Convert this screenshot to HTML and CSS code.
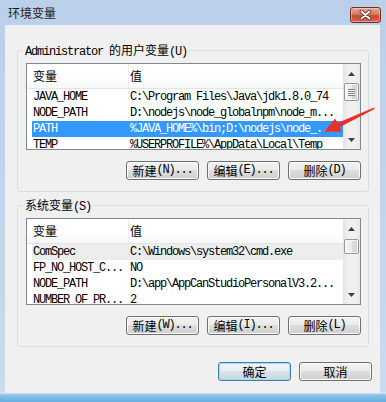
FILE: index.html
```html
<!DOCTYPE html>
<html lang="zh-CN">
<head>
<meta charset="utf-8">
<title>环境变量</title>
<link rel="stylesheet" href="styles.css">
</head>
<body>
<div class="window">
  <div class="titlebar">
    <span class="title cjk">环境变量</span>
    <div class="close">
      <svg width="13" height="10" viewBox="0 0 13 10">
        <path d="M2.5 1.5 L10.5 8.5 M10.5 1.5 L2.5 8.5" stroke="#5a2018" stroke-width="3.6" stroke-linecap="round"/>
        <path d="M2.5 1.5 L10.5 8.5 M10.5 1.5 L2.5 8.5" stroke="#fff" stroke-width="2" stroke-linecap="round"/>
      </svg>
    </div>
  </div>
  <div class="client">
    <fieldset class="group">
      <legend>Administrator <span class="cjk">的用户变量</span>(U)</legend>
      <div class="list">
        <div class="list-body">
          <div class="header"><div class="c1"><span class="cjk">变量</span></div><div class="c2"><span class="cjk">值</span></div></div>
          <div class="row"><div class="c1">JAVA_HOME</div><div class="c2">C:\Program Files\Java\jdk1.8.0_74</div></div>
          <div class="row"><div class="c1">NODE_PATH</div><div class="c2">D:\nodejs\node_globalnpm\node_m...</div></div>
          <div class="row sel"><div class="c1">PATH</div><div class="c2">%JAVA_HOME%\bin;D:\nodejs\node_...</div></div>
          <div class="row"><div class="c1">TEMP</div><div class="c2">%USERPROFILE%\AppData\Local\Temp</div></div>
        </div>
        <div class="scrollbar">
          <div class="sb-btn"><svg width="7" height="4" viewBox="0 0 7 4"><polygon points="3.5,0 7,4 0,4" fill="#404040"/></svg></div>
          <div class="thumb"><div class="grip"></div></div>
          <div class="sb-space"></div>
          <div class="sb-btn"><svg width="7" height="4" viewBox="0 0 7 4"><polygon points="0,0 7,0 3.5,4" fill="#404040"/></svg></div>
        </div>
      </div>
      <div class="buttons">
        <div class="btn"><span class="cjk">新建</span>(N)...</div>
        <div class="btn"><span class="cjk">编辑</span>(E)...</div>
        <div class="btn"><span class="cjk">删除</span>(D)</div>
      </div>
    </fieldset>
    <fieldset class="group second">
      <legend><span class="cjk">系统变量</span>(S)</legend>
      <div class="list">
        <div class="list-body">
          <div class="header"><div class="c1"><span class="cjk">变量</span></div><div class="c2"><span class="cjk">值</span></div></div>
          <div class="row inactive"><div class="c1">ComSpec</div><div class="c2">C:\Windows\system32\cmd.exe</div></div>
          <div class="row"><div class="c1">FP_NO_HOST_C...</div><div class="c2">NO</div></div>
          <div class="row"><div class="c1">NODE_PATH</div><div class="c2">D:\app\AppCanStudioPersonalV3.2...</div></div>
          <div class="row"><div class="c1">NUMBER_OF_PR...</div><div class="c2">2</div></div>
        </div>
        <div class="scrollbar">
          <div class="sb-btn"><svg width="7" height="4" viewBox="0 0 7 4"><polygon points="3.5,0 7,4 0,4" fill="#404040"/></svg></div>
          <div class="thumb small"></div>
          <div class="sb-space"></div>
          <div class="sb-btn"><svg width="7" height="4" viewBox="0 0 7 4"><polygon points="0,0 7,0 3.5,4" fill="#404040"/></svg></div>
        </div>
      </div>
      <div class="buttons">
        <div class="btn"><span class="cjk">新建</span>(W)...</div>
        <div class="btn"><span class="cjk">编辑</span>(I)...</div>
        <div class="btn"><span class="cjk">删除</span>(L)</div>
      </div>
    </fieldset>
    <div class="dialog-buttons">
      <div class="btn default"><span class="cjk">确定</span></div>
      <div class="btn"><span class="cjk">取消</span></div>
    </div>
  </div>
</div>
<svg class="arrow" width="386" height="402" viewBox="0 0 386 402">
  <polygon points="374.1,107.6 337.3,122.9 335.2,118.6 324,132 341.6,131.4 339.5,127.3 374.6,108.9" fill="#e5322a"/>
</svg>
</body>
</html>
```

FILE: styles.css
```css
* { box-sizing: border-box; }
html, body { margin: 0; padding: 0; }
body {
  width: 386px;
  height: 402px;
  overflow: hidden;
  position: relative;
  background: linear-gradient(to bottom, #bad0ea 0px, #c4d7ed 300px, #c9dbef 391px, #d6e5f4 393px, #8ac2ea 395px, #66ace0 402px);
  font-family: "Liberation Mono", "Noto Sans CJK SC", monospace;
  font-size: 12px;
  letter-spacing: -1.2px;
  color: #000;
}
.cjk {
  font-family: "Noto Sans CJK SC", "Noto Sans CJK JP", sans-serif;
  font-size: 12px;
  letter-spacing: 0;
}
.titlebar {
  height: 25px;
  display: flex;
  align-items: flex-start;
  justify-content: space-between;
  padding-left: 8px;
  padding-right: 5px;
}
.title {
  margin-top: 6px;
  line-height: 14px;
  color: #1a1a1a;
}
.close {
  margin-top: 7px;
  width: 31px;
  height: 16px;
  border: 1px solid #7a2b20;
  border-radius: 3px;
  background: linear-gradient(#e6a596, #d77c68 45%, #c7472f 55%, #d9684c);
  box-shadow: inset 0 0 0 1px rgba(255, 255, 255, 0.35);
  display: flex;
  align-items: center;
  justify-content: center;
}
.client {
  margin-left: 5px;
  width: 375px;
  height: 368px;
  background: #f0f0f0;
  padding-top: 19px;
}
.group {
  margin: 0 11px 0 12px;
  padding: 7px 7px 11px 8px;
  border: 1px solid #d5dfe5;
  border-radius: 3px;
  min-width: 0;
}
.group.second { margin-top: 7px; }
.group legend {
  height: 12px;
  line-height: 12px;
  padding: 0 2px;
  margin-left: -3px;
  white-space: nowrap;
}
.group legend .cjk { line-height: 12px; }
.list {
  display: flex;
  height: 87px;
  border: 1px solid #828790;
  background: #fff;
}
.list-body {
  flex: 1;
  min-width: 0;
  overflow: hidden;
}
.header {
  display: flex;
  height: 25px;
  padding-left: 5px;
  border-bottom: 1px solid #e5e5e5;
  background: linear-gradient(#ffffff, #ffffff 55%, #f6f7f8);
  line-height: 24px;
}
.header .c1 { border-right: 1px solid #ececec; }
.row {
  display: flex;
  height: 16px;
  line-height: 16px;
  margin-left: 5px;
  white-space: nowrap;
}
.c1 {
  width: 97px;
  flex: none;
  padding-left: 1px;
  overflow: hidden;
}
.c2 {
  flex: 1;
  min-width: 0;
  padding-left: 1px;
  overflow: hidden;
}
.row.sel { background: #3399ff; color: #fff; }
.row.inactive { background: #ededed; }
.scrollbar {
  width: 17px;
  flex: none;
  display: flex;
  flex-direction: column;
  align-items: center;
  background: linear-gradient(to right, #e3e3e3, #f0f0f0 30%, #f1f1f1 70%, #e7e7e7);
}
.sb-btn {
  width: 17px;
  height: 17px;
  display: flex;
  align-items: center;
  justify-content: center;
  padding-top: 2px;
}
.sb-btn:last-child { padding-top: 0; padding-bottom: 1px; }
.thumb {
  margin-top: 2px;
  width: 15px;
  height: 18px;
  border: 1px solid #979797;
  border-radius: 2px;
  background: linear-gradient(to right, #f6f6f6, #ececec 50%, #dcdcdc 51%, #d2d2d2);
  box-shadow: inset 0 0 0 1px rgba(255, 255, 255, 0.7);
  display: flex;
  align-items: center;
  justify-content: center;
}
.thumb.small { height: 15px; margin-top: 3px; }
.grip {
  width: 7px;
  height: 7px;
  background: repeating-linear-gradient(to bottom, #7c7c7c 0, #7c7c7c 1px, #fafafa 1px, #fafafa 2px);
}
.sb-space { flex: 1; }
.buttons {
  display: flex;
  justify-content: flex-end;
  gap: 8px;
  margin-top: 11px;
}
.btn {
  width: 73px;
  height: 19px;
  border: 1px solid #707070;
  border-radius: 3px;
  background: linear-gradient(#f3f3f3, #ebebeb 45%, #dddddd 50%, #cfcfcf);
  box-shadow: inset 0 0 0 1px #fbfbfb;
  display: flex;
  align-items: center;
  justify-content: center;
  line-height: 17px;
  white-space: nowrap;
}
.btn .cjk { line-height: 17px; }
.btn.default {
  border-color: #3c7fb1;
  box-shadow: inset 0 0 0 1px #9ddcf6;
  background: linear-gradient(#f2f6f9, #e8eef2 45%, #d8e2e8 50%, #ccd7de);
}
.dialog-buttons {
  display: flex;
  justify-content: flex-end;
  gap: 8px;
  margin-top: 15px;
  padding-right: 8px;
}
.arrow {
  position: absolute;
  left: 0;
  top: 0;
  pointer-events: none;
}
```
